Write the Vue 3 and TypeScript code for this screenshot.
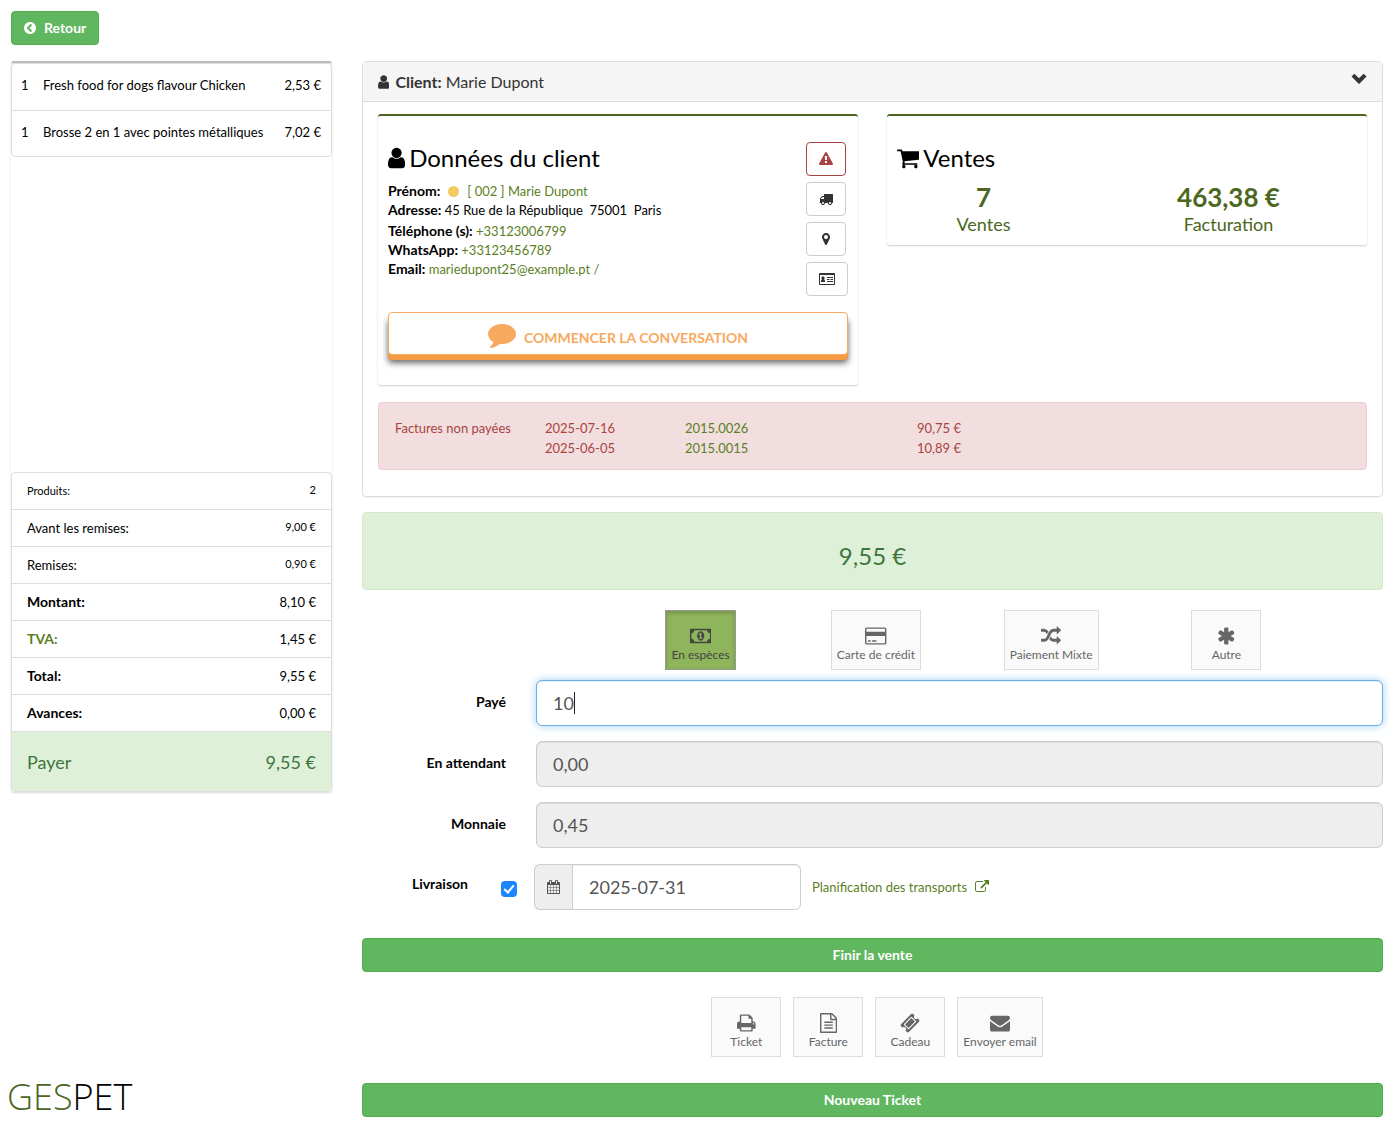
<script setup lang="ts">
import { defineComponent, h, ref } from 'vue'

interface Glyph { x: number; w: number; d: string }

const glyphs: Record<string, Glyph> = {
  back: { x: 128, w: 1536, d: 'M1037 1395l102-102q19-19 19-45t-19-45l-307-307 307-307q19-19 19-45t-19-45l-102-102q-19-19-45-19t-45 19l-454 454q-19 19-19 45t19 45l454 454q19 19 45 19t45-19zm627-499q0 209-103 385.5t-279.5 279.5-385.5 103-385.5-103-279.5-279.5-103-385.5 103-385.5 279.5-279.5 385.5-103 385.5 103 279.5 279.5 103 385.5z' },
  user: { x: 256, w: 1280, d: 'M1536 1399q0 109-62.5 187t-150.5 78h-854q-88 0-150.5-78t-62.5-187q0-85 8.5-160.5t31.5-152 58.5-131 94-89 134.5-34.5q131 128 313 128t313-128q76 0 134.5 34.5t94 89 58.5 131 31.5 152 8.5 160.5zm-256-887q0 159-112.5 271.5t-271.5 112.5-271.5-112.5-112.5-271.5 112.5-271.5 271.5-112.5 271.5 112.5 112.5 271.5z' },
  chevron: { x: 0, w: 1792, d: 'M56 620L376 300L896 820L1416 300L1736 620L896 1460z' },
  cart: { x: 64, w: 1664, d: 'M704 1536q0 52-38 90t-90 38-90-38-38-90 38-90 90-38 90 38 38 90zm896 0q0 52-38 90t-90 38-90-38-38-90 38-90 90-38 90 38 38 90zm128-1088v512q0 24-16.5 42.5t-40.5 21.5l-1044 122q13 60 13 70 0 16-24 64h920q26 0 45 19t19 45-19 45-45 19h-1024q-26 0-45-19t-19-45q0-11 8-31.5t16-36 21.5-40 15.5-29.5l-177-823h-204q-26 0-45-19t-19-45 19-45 45-19h256q16 0 28.5 6.5t19.5 15.5 13 24.5 8 26 5.5 29.5 4.5 26h1201q26 0 45 19t19 45z' },
  warning: { x: 0, w: 1792, d: 'M1024 1375v-190q0-14-9.5-23.5t-22.5-9.5h-192q-13 0-22.5 9.5t-9.5 23.5v190q0 14 9.5 23.5t22.5 9.5h192q13 0 22.5-9.5t9.5-23.5zm-2-374l18-459q0-12-10-19-13-11-24-11h-220q-11 0-24 11-10 7-10 21l17 457q0 10 10 16.5t24 6.5h185q14 0 23.5-6.5t10.5-16.5zm-14-934l768 1408q35 63-2 126-17 29-46.5 46t-63.5 17h-1536q-34 0-63.5-17t-46.5-46q-37-63-2-126l768-1408q17-31 47-49t65-18 65 18 47 49z' },
  truck: { x: 0, w: 1792, d: 'M640 1408q0-52-38-90t-90-38-90 38-38 90 38 90 90 38 90-38 38-90zm-384-512h384v-256h-158q-13 0-22 9l-195 195q-9 9-9 22v30zm1280 512q0-52-38-90t-90-38-90 38-38 90 38 90 90 38 90-38 38-90zm256-1088v1024q0 15-4 26.5t-13.5 18.5-16.5 11.5-23.5 6-22.5 2-25.5 0-22.5-.5q0 106-75 181t-181 75-181-75-75-181h-384q0 106-75 181t-181 75-181-75-75-181h-64q-3 0-22.5.5t-25.5 0-22.5-2-23.5-6-16.5-11.5-13.5-18.5-4-26.5q0-26 19-45t45-19v-320q0-8-.5-35t0-38 2.5-34.5 6.5-37 14-30.5 22.5-30l198-198q19-19 50.5-32t58.5-13h160v-192q0-26 19-45t45-19h1024q26 0 45 19t19 45z' },
  marker: { x: 384, w: 1024, d: 'M1152 640q0-106-75-181t-181-75-181 75-75 181 75 181 181 75 181-75 75-181zm256 0q0 109-33 179l-364 774q-16 33-47.5 52t-67.5 19-67.5-19-46.5-52l-365-774q-33-70-33-179 0-212 150-362t362-150 362 150 150 362z' },
  card: { x: 0, w: 2048, d: 'M0 256q0-128 128-128h1792q128 0 128 128v1280q0 128-128 128h-1792q-128 0-128-128zm128 128v1120q0 32 32 32h1728q32 0 32-32v-1120zM256 1280v-100q0-200 130-240a210 210 0 1 1 252 0q130 40 130 240v100zM1024 640h768v128h-768zM1024 896h320v128h-320zM1472 896h320v128h-320zM1024 1152h768v128h-768z' },
  comment: { x: 0, w: 1792, d: 'M1792 896q0 174-120 321.5t-326 233-450 85.5q-70 0-145-8-198 175-460 242-49 14-114 22-17 2-30.5-9t-17.5-29v-1q-3-4-.5-12t2-10 4.5-9.5l6-9 7-8.5 8-9q7-8 31-34.5t34.5-38 31-39.5 32.5-51 27-59 26-76q-157-89-247.5-220t-90.5-281q0-130 71-248.5t191-204.5 286-136.5 348-50.5 348 50.5 286 136.5 191 204.5 71 248.5z' },
  money: { x: 0, w: 1920, d: 'M768 1152h384v-96h-128v-448h-114l-148 137 77 80q42-37 55-57h2v288h-128v96zm512-256q0 70-21 142t-59.5 134-101.5 101-138 39-138-39-101.5-101-59.5-134-21-142 21-142 59.5-134 101.5-101 138-39 138 39 101.5 101 59.5 134 21 142zm512 256v-512q-106 0-181-75t-75-181h-1152q0 106-75 181t-181 75v512q106 0 181 75t75 181h1152q0-106 75-181t181-75zm128-832v1152q0 26-19 45t-45 19h-1792q-26 0-45-19t-19-45v-1152q0-26 19-45t45-19h1792q26 0 45 19t19 45z' },
  credit: { x: 0, w: 1920, d: 'M1760 128q66 0 113 47t47 113v1216q0 66-47 113t-113 47h-1600q-66 0-113-47t-47-113v-1216q0-66 47-113t113-47h1600zm-1600 128q-13 0-22.5 9.5t-9.5 22.5v224h1664v-224q0-13-9.5-22.5t-22.5-9.5h-1600zm1600 1280q13 0 22.5-9.5t9.5-22.5v-608h-1664v608q0 13 9.5 22.5t22.5 9.5h1600zm-1504-128v-128h256v128h-256zm384 0v-128h384v128h-384z' },
  random: { x: 0, w: 1792, d: 'M666 481q-60 92-137 273-22-45-37-72.5t-40.5-63.5-51-56.5-63-35-81.5-14.5h-224q-14 0-23-9t-9-23v-192q0-14 9-23t23-9h224q250 0 410 225zm1126 799q0 14-9 23l-320 320q-9 9-23 9-13 0-22.5-9.5t-9.5-22.5v-192q-32 0-85 .5t-81 1-73-1-71-5-64-10.5-63-18.5-58-28.5-59-40-55-53.5-56-69.5q59-93 136-273 22 45 37 72.5t40.5 63.5 51 56.5 63 35 81.5 14.5h256v-192q0-14 9-23t23-9q12 0 24 10l319 319q9 9 9 23zm0-896q0 14-9 23l-320 320q-9 9-23 9-13 0-22.5-9.5t-9.5-22.5v-192h-256q-48 0-87 15t-69 45-51 61.5-45 77.5q-32 62-78 171-29 66-49.5 111t-54 105-64 100-74 83-90 68.5-106.5 42-128 16.5h-224q-14 0-23-9t-9-23v-192q0-14 9-23t23-9h224q48 0 87-15t69-45 51-61.5 45-77.5q32-62 78-171 29-66 49.5-111t54-105 64-100 74-83 90-68.5 106.5-42 128-16.5h256v-192q0-14 9-23t23-9q12 0 24 10l319 319q9 9 9 23z' },
  asterisk: { x: 64, w: 1664, d: 'M1546 1050q46 26 59.5 77.5t-12.5 97.5l-64 110q-26 46-77.5 59.5t-97.5-12.5l-266-153v307q0 52-38 90t-90 38h-128q-52 0-90-38t-38-90v-307l-266 153q-46 26-97.5 12.5t-77.5-59.5l-64-110q-26-46-12.5-97.5t59.5-77.5l266-154-266-154q-46-26-59.5-77.5t12.5-97.5l64-110q26-46 77.5-59.5t97.5 12.5l266 153v-307q0-52 38-90t90-38h128q52 0 90 38t38 90v307l266-153q46-26 97.5-12.5t77.5 59.5l64 110q26 46 12.5 97.5t-59.5 77.5l-266 154z' },
  calendar: { x: 64, w: 1664, d: 'M192 1664h288v-288h-288v288zm352 0h320v-288h-320v288zm-352-352h288v-320h-288v320zm352 0h320v-320h-320v320zm-352-384h288v-288h-288v288zm736 736h320v-288h-320v288zm-384-736h320v-288h-320v288zm768 736h288v-288h-288v288zm-384-352h320v-320h-320v320zm-352-864v-288q0-13-9.5-22.5t-22.5-9.5h-64q-13 0-22.5 9.5t-9.5 22.5v288q0 13 9.5 22.5t22.5 9.5h64q13 0 22.5-9.5t9.5-22.5zm736 864h288v-320h-288v320zm-384-384h320v-288h-320v288zm384 0h288v-288h-288v288zm32-480v-288q0-13-9.5-22.5t-22.5-9.5h-64q-13 0-22.5 9.5t-9.5 22.5v288q0 13 9.5 22.5t22.5 9.5h64q13 0 22.5-9.5t9.5-22.5zm384-64v1280q0 52-38 90t-90 38h-1408q-52 0-90-38t-38-90v-1280q0-52 38-90t90-38h128v-96q0-66 47-113t113-47h64q66 0 113 47t47 113v96h384v-96q0-66 47-113t113-47h64q66 0 113 47t47 113v96h128q52 0 90 38t38 90z' },
  external: { x: 0, w: 1792, d: 'M1408 928v320q0 119-84.5 203.5t-203.5 84.5h-832q-119 0-203.5-84.5t-84.5-203.5v-832q0-119 84.5-203.5t203.5-84.5h704q14 0 23 9t9 23v64q0 14-9 23t-23 9h-704q-66 0-113 47t-47 113v832q0 66 47 113t113 47h832q66 0 113-47t47-113v-320q0-14 9-23t23-9h64q14 0 23 9t9 23zm384-864v512q0 26-19 45t-45 19-45-19l-176-176-652 652q-10 10-23 10t-23-10l-114-114q-10-10-10-23t10-23l652-652-176-176q-19-19-19-45t19-45 45-19h512q26 0 45 19t19 45z' },
  print: { x: 64, w: 1664, d: 'M448 1536h896v-256h-896v256zm0-640h896v-384h-160q-40 0-68-28t-28-68v-160h-640v640zm1152 64q0-26-19-45t-45-19-45 19-19 45 19 45 45 19 45-19 19-45zm128 0v416q0 13-9.5 22.5t-22.5 9.5h-224v160q0 40-28 68t-68 28h-960q-40 0-68-28t-28-68v-160h-224q-13 0-22.5-9.5t-9.5-22.5v-416q0-79 56.5-135.5t135.5-56.5h64v-544q0-40 28-68t68-28h672q40 0 88 20t76 48l152 152q28 28 48 76t20 88v256h64q79 0 135.5 56.5t56.5 135.5z' },
  file: { x: 128, w: 1536, d: 'M1596 380q28 28 48 76t20 88v1152q0 40-28 68t-68 28h-1344q-40 0-68-28t-28-68v-1600q0-40 28-68t68-28h896q40 0 88 20t76 48zm-444-244v376h376q-10-29-22-41l-313-313q-12-12-41-22zm384 1528v-1024h-416q-40 0-68-28t-28-68v-416h-768v1536h1280zm-1024-864q0-14 9-23t23-9h704q14 0 23 9t9 23v64q0 14-9 23t-23 9h-704q-14 0-23-9t-9-23v-64zm736 224q14 0 23 9t9 23v64q0 14-9 23t-23 9h-704q-14 0-23-9t-9-23v-64q0-14 9-23t23-9h704zm0 256q14 0 23 9t9 23v64q0 14-9 23t-23 9h-704q-14 0-23-9t-9-23v-64q0-14 9-23t23-9h704z' },
  ticket: { x: 0, w: 1792, d: 'M1024 452l316 316-572 572-316-316zm-211 979l618-618q19-19 19-45t-19-45l-362-362q-18-18-45-18t-45 18l-618 618q-19 19-19 45t19 45l362 362q18 18 45 18t45-18zm889-637l-907 908q-37 37-90.5 37t-90.5-37l-126-126q56-56 56-136t-56-136-136-56-136 56l-125-126q-37-37-37-90.5t37-90.5l907-906q37-37 90.5-37t90.5 37l125 125q-56 56-56 136t56 136 136 56 136-56l126 125q37 37 37 90.5t-37 90.5z' },
  envelope: { x: 0, w: 1792, d: 'M1792 710v794q0 66-47 113t-113 47h-1472q-66 0-113-47t-47-113v-794q44 49 101 87 362 246 497 345 57 42 92.5 65.5t94.5 48 110 24.5h2q51 0 110-24.5t94.5-48 92.5-65.5q170-123 498-345 57-39 100-87zm0-294q0 79-49 151t-122 123q-376 261-468 325-10 7-42.5 31t-54 38.5-52 32.5-57.5 27-50 9h-2q-23 0-50-9t-57.5-27-52-32.5-54-38.5-42.5-31q-91-64-262-182.5t-205-142.5q-62-42-117-115.5t-55-136.5q0-78 41.5-130t118.5-52h1472q65 0 112.5 47t47.5 113z' },
}

// Icon scaled by its font-size: 1792 units to the em.
const Icon = defineComponent({
  props: { name: { type: String, required: true } },
  setup(props) {
    return () => {
      const g = glyphs[props.name]
      return h('svg', {
        viewBox: `${g.x} 0 ${g.w} 1792`,
        style: { width: `${g.w / 1792}em`, height: '1em' },
        fill: 'currentColor',
        'fill-rule': props.name === 'card' ? 'evenodd' : 'nonzero',
        'aria-hidden': 'true',
      }, [h('path', { d: g.d })])
    }
  },
})

const products = [
  { qty: 1, name: 'Fresh food for dogs flavour Chicken', price: '2,53 €' },
  { qty: 1, name: 'Brosse 2 en 1 avec pointes métalliques', price: '7,02 €' },
]

const totals = [
  { label: 'Produits:', value: '2', kind: 'count' },
  { label: 'Avant les remises:', value: '9,00 €', kind: 'minor' },
  { label: 'Remises:', value: '0,90 €', kind: 'minor' },
  { label: 'Montant:', value: '8,10 €', kind: 'major' },
  { label: 'TVA:', value: '1,45 €', kind: 'major tax' },
  { label: 'Total:', value: '9,55 €', kind: 'major' },
  { label: 'Avances:', value: '0,00 €', kind: 'major' },
  { label: 'Payer', value: '9,55 €', kind: 'pay' },
]

const invoices = [
  { date: '2025-07-16', number: '2015.0026', amount: '90,75 €' },
  { date: '2025-06-05', number: '2015.0015', amount: '10,89 €' },
]

const methods = [
  { icon: 'money', label: 'En espèces' },
  { icon: 'credit', label: 'Carte de crédit' },
  { icon: 'random', label: 'Paiement Mixte' },
  { icon: 'asterisk', label: 'Autre' },
]

const outputs = [
  { icon: 'print', label: 'Ticket' },
  { icon: 'file', label: 'Facture' },
  { icon: 'ticket', label: 'Cadeau' },
  { icon: 'envelope', label: 'Envoyer email' },
]

const actions = [
  { icon: 'warning', label: 'Alertes' },
  { icon: 'truck', label: 'Livraisons' },
  { icon: 'marker', label: 'Localisation' },
  { icon: 'card', label: 'Fiche client' },
]

const method = ref('En espèces')
const paid = ref('10')
const pending = ref('0,00')
const change = ref('0,45')
const delivery = ref(true)
const deliveryDate = ref('2025-07-31')
</script>

<template>
  <div class="page">
    <header>
      <button type="button" class="btn back"><Icon name="back" />Retour</button>
    </header>

    <div class="columns">
      <aside class="side">
        <section class="receipt">
          <ul class="products">
            <li v-for="p in products" :key="p.name">
              <span class="qty">{{ p.qty }}</span>
              <span class="name">{{ p.name }}</span>
              <span class="price">{{ p.price }}</span>
            </li>
          </ul>
          <dl class="totals">
            <div v-for="t in totals" :key="t.label" :class="t.kind">
              <dt>{{ t.label }}</dt>
              <dd>{{ t.value }}</dd>
            </div>
          </dl>
        </section>
        <div class="logo"><span>GES</span>PET</div>
      </aside>

      <main>
        <section class="panel">
          <div class="panel-head">
            <Icon name="user" />
            <span><b>Client:</b> Marie Dupont</span>
            <button type="button" class="toggle" aria-label="Replier"><Icon name="chevron" /></button>
          </div>
          <div class="panel-body">
            <div class="cards">
              <article class="card customer">
                <div class="customer-top">
                  <div class="details">
                    <h2><Icon name="user" />Données du client</h2>
                    <p><b>Prénom:</b><i class="dot"></i><a href="#">[ 002 ] Marie Dupont</a></p>
                    <p class="address"><b>Adresse:</b> 45 Rue de la République&nbsp; 75001&nbsp; Paris</p>
                    <p><b>Téléphone (s):</b> <a href="#">+33123006799</a></p>
                    <p><b>WhatsApp:</b> <a href="#">+33123456789</a></p>
                    <p><b>Email:</b> <a href="#">mariedupont25@example.pt /</a></p>
                  </div>
                  <div class="actions">
                    <button v-for="a in actions" :key="a.icon" type="button" :class="a.icon" :aria-label="a.label">
                      <Icon :name="a.icon" />
                    </button>
                  </div>
                </div>
                <button type="button" class="chat"><Icon name="comment" /><span>COMMENCER LA CONVERSATION</span></button>
              </article>

              <article class="card sales">
                <h2><Icon name="cart" />Ventes</h2>
                <div class="stats">
                  <div><strong>7</strong><span>Ventes</span></div>
                  <div><strong>463,38 €</strong><span>Facturation</span></div>
                </div>
              </article>
            </div>

            <div class="unpaid">
              <table>
                <tbody>
                  <tr v-for="(inv, i) in invoices" :key="inv.number">
                    <th v-if="i === 0" :rowspan="invoices.length" scope="rowgroup">Factures non payées</th>
                    <td class="date">{{ inv.date }}</td>
                    <td class="number"><a href="#">{{ inv.number }}</a></td>
                    <td>{{ inv.amount }}</td>
                  </tr>
                </tbody>
              </table>
            </div>
          </div>
        </section>

        <div class="due">9,55 €</div>

        <div class="methods">
          <div v-for="m in methods" :key="m.label">
            <button type="button" class="tile" :class="{ active: method === m.label }" @click="method = m.label">
              <Icon :name="m.icon" />{{ m.label }}
            </button>
          </div>
        </div>

        <form @submit.prevent>
          <div class="row">
            <label for="paid">Payé</label>
            <div class="field focused"><input id="paid" v-model="paid" type="text"><i class="caret"></i></div>
          </div>
          <div class="row">
            <label for="pending">En attendant</label>
            <div class="field"><input id="pending" v-model="pending" type="text" readonly></div>
          </div>
          <div class="row">
            <label for="change">Monnaie</label>
            <div class="field"><input id="change" v-model="change" type="text" readonly></div>
          </div>
          <div class="row delivery">
            <label for="delivery">Livraison</label>
            <input id="delivery" v-model="delivery" type="checkbox">
            <div class="date-group">
              <span class="addon"><Icon name="calendar" /></span>
              <input v-model="deliveryDate" type="text" aria-label="Date de livraison">
            </div>
            <a href="#">Planification des transports<Icon name="external" /></a>
          </div>
          <button type="submit" class="btn wide">Finir la vente</button>
        </form>

        <div class="outputs">
          <button v-for="o in outputs" :key="o.label" type="button" class="tile"><Icon :name="o.icon" />{{ o.label }}</button>
        </div>

        <button type="button" class="btn wide">Nouveau Ticket</button>
      </main>
    </div>
  </div>
</template>

<style>
body {
  margin: 0;
  background: #fff;
}
</style>

<style scoped>
.page,
button,
input {
  font-family: Lato, "Liberation Sans", sans-serif;
  line-height: 20px;
}
.page {
  padding: 11px 12px 12px 11px;
  color: #000;
  font-size: 13px;
}
button,
b,
label {
  font-size: 14px;
}
.page *,
.page *::before,
.page *::after {
  box-sizing: border-box;
}
.page :deep(svg) {
  display: block;
  flex: none;
}
a {
  color: #5b7f24;
  text-decoration: none;
}
h2,
p,
dl,
dd,
ul {
  margin: 0;
  padding: 0;
}
button {
  cursor: pointer;
}

.btn {
  display: flex;
  align-items: center;
  justify-content: center;
  height: 34px;
  padding: 0 12px;
  border: 1px solid #4cae4c;
  border-radius: 4px;
  background: #60b760;
  color: #fff;
  font-weight: 700;
}
.back {
  gap: 8px;
}
.wide {
  width: 100%;
}

.columns {
  display: grid;
  grid-template-columns: 321fr 1021fr;
  gap: 30px;
  margin-top: 16px;
}

.side {
  display: flex;
  flex-direction: column;
}
.receipt {
  border-top: 2px solid #bbb;
  border-radius: 3px;
  box-shadow: 0 1px 2px rgba(0, 0, 0, 0.15);
}
.products {
  min-height: 409px;
  list-style: none;
}
.products li {
  display: flex;
  align-items: center;
  height: 47px;
  padding: 0 10px 4px 9px;
  border: 1px solid #ddd;
  border-bottom-width: 0;
}
.products li:first-child {
  border-radius: 4px 4px 0 0;
}
.products li:last-child {
  border-bottom-width: 1px;
  border-radius: 0 0 4px 4px;
}
.qty {
  width: 22px;
}
.name {
  flex: 1;
  white-space: nowrap;
}
.totals {
  border: 1px solid #ddd;
  border-radius: 4px;
  overflow: hidden;
}
.totals div {
  display: flex;
  align-items: center;
  justify-content: space-between;
  height: 37px;
  padding: 0 15px;
  border-bottom: 1px solid #ddd;
}
.count,
.minor dd {
  font-size: 11px;
}
.minor dd,
.count dd {
  padding-bottom: 2px;
}
.major dt {
  font-size: 14px;
  font-weight: 700;
}
.tax dt {
  color: #5b7f24;
}
.totals .pay {
  height: 59px;
  border: 0;
  background: #dff0d8;
  color: #3c763d;
  font-size: 18px;
}
.logo {
  margin-top: auto;
  margin-left: -4px;
  font-family: "Open Sans", sans-serif;
  font-size: 36px;
  font-weight: 300;
  line-height: 40px;
}
.logo span {
  color: #4b6422;
}

.panel {
  border: 1px solid #ddd;
  border-radius: 4px;
  box-shadow: 0 1px 1px rgba(0, 0, 0, 0.05);
}
.panel-head {
  display: flex;
  align-items: center;
  gap: 6px;
  height: 40px;
  padding: 0 15px;
  border-bottom: 1px solid #ddd;
  background: #f5f5f5;
  color: #333;
  font-size: 16px;
}
.panel-head b {
  font-size: 16px;
}
.toggle {
  margin-left: auto;
  padding: 0 0 6px;
  border: 0;
  background: none;
  color: #333;
  font-size: 16px;
}
.panel-body {
  padding: 12px 15px 26px;
}
.cards {
  display: grid;
  grid-template-columns: 1fr 1fr;
  align-items: start;
  gap: 29px;
}
.card {
  padding: 26px 10px 0;
  border-top: 2px solid #4b6422;
  border-radius: 3px;
  box-shadow: 0 1px 2px rgba(0, 0, 0, 0.2);
}
.customer {
  padding-bottom: 30px;
}
.customer-top {
  display: flex;
  justify-content: space-between;
}
h2 {
  display: flex;
  align-items: center;
  gap: 4px;
  height: 32px;
  margin-bottom: 7px;
  font-size: 24px;
  font-weight: 400;
}
.details p {
  height: 19px;
  white-space: nowrap;
}
.details .address {
  height: 21px;
}
.dot {
  display: inline-block;
  width: 11px;
  height: 11px;
  margin: 0 8px;
  border-radius: 50%;
  background: #f0cb62;
  vertical-align: -1px;
}
.actions {
  display: flex;
  flex-direction: column;
  align-items: flex-start;
  gap: 6px;
}
.actions button {
  display: flex;
  align-items: center;
  justify-content: center;
  min-width: 40px;
  height: 34px;
  padding: 0 12px;
  border: 1px solid #ccc;
  border-radius: 4px;
  background: #fff;
  color: #333;
}
.actions .warning {
  border-color: #a94442;
  color: #a94442;
}
.actions .card {
  box-shadow: none;
}
.chat {
  display: flex;
  align-items: center;
  justify-content: center;
  gap: 8px;
  width: 100%;
  height: 43px;
  margin-top: 16px;
  border: 1px solid #f7a95f;
  border-radius: 4px;
  background: #fff;
  box-shadow: 0 5px 0 #f59b45, 0 8px 6px rgba(0, 0, 0, 0.6);
  color: #f7a95f;
  font-weight: 700;
}
.chat :deep(svg) {
  font-size: 28px;
}
.chat span {
  padding-top: 8px;
}
.sales {
  padding-bottom: 10px;
}
.stats {
  display: grid;
  grid-template-columns: 1fr 1fr;
  margin: 0 6px 0 -36px;
  color: #4b6720;
  font-size: 18px;
  text-align: center;
}
.stats strong,
.stats span {
  display: block;
}
.stats strong {
  font-size: 26px;
  line-height: 32px;
}
.stats span {
  line-height: 22px;
}

.unpaid {
  margin-top: 17px;
  padding: 15px 16px 11px;
  border: 1px solid #ebccd1;
  border-radius: 4px;
  background: #f2dede;
  color: #a94442;
}
.unpaid table {
  width: 100%;
  border-collapse: collapse;
}
.unpaid th,
.unpaid td {
  padding: 0;
  font-weight: 400;
  text-align: left;
  vertical-align: top;
}
.unpaid th {
  width: 150px;
}
.unpaid .date {
  width: 140px;
}
.unpaid .number {
  width: 232px;
}

.due {
  margin-top: 15px;
  padding: 28px 0 18px;
  border: 1px solid #d6e9c6;
  border-radius: 4px;
  background: #dff0d8;
  color: #3c763d;
  font-size: 24px;
  line-height: 30px;
  text-align: center;
}

.methods {
  display: grid;
  grid-template-columns: repeat(4, 1fr);
  margin: 20px 0 10px;
  padding: 0 69px 0 251px;
  text-align: center;
}
.tile {
  display: inline-flex;
  flex-direction: column;
  align-items: center;
  gap: 1px;
  min-width: 70px;
  height: 60px;
  padding: 15px 5px 0;
  border: 1px solid #ddd;
  background: #fafafa;
  color: #666;
  font-size: 12px;
  line-height: 16px;
  white-space: nowrap;
  vertical-align: top;
}
.tile :deep(svg) {
  font-size: 20px;
}
.tile.active {
  border-color: #999;
  background: #8eb55c;
  box-shadow: inset 0 2px 4px rgba(0, 0, 0, 0.2);
  color: #444;
}

.row {
  display: flex;
  align-items: center;
  gap: 30px;
  margin-bottom: 15px;
}
.row label {
  width: 144px;
  padding-bottom: 2px;
  font-weight: 700;
  text-align: right;
}
.field {
  position: relative;
  flex: 1;
}
.row input[type="text"] {
  display: block;
  width: 100%;
  height: 46px;
  padding: 0 16px;
  border: 1px solid #ccc;
  border-radius: 6px;
  outline: 0;
  background: #fff;
  box-shadow: inset 0 1px 1px rgba(0, 0, 0, 0.075);
  color: #555;
  font-size: 18px;
}
.row input[readonly] {
  background: #eee;
}
.row .focused input {
  border-color: #66afe9;
  box-shadow: inset 0 1px 1px rgba(0, 0, 0, 0.075), 0 0 8px rgba(102, 175, 233, 0.6);
}
.caret {
  position: absolute;
  top: 12px;
  left: 38px;
  width: 1px;
  height: 22px;
  background: #222;
}
.row.delivery {
  gap: 0;
  margin: 16px 0 28px;
}
.delivery label {
  width: 106px;
  padding-bottom: 6px;
}
.delivery input[type="checkbox"] {
  position: relative;
  width: 16px;
  height: 16px;
  margin: 4px 17px 0 33px;
  border-radius: 4px;
  background: #1d86ff;
  appearance: none;
}
.delivery input[type="checkbox"]:checked::after {
  content: "";
  position: absolute;
  top: 2px;
  left: 5px;
  width: 6px;
  height: 10px;
  border: solid #fff;
  border-width: 0 2px 2px 0;
  transform: rotate(40deg);
}
.date-group {
  display: flex;
  width: 267px;
  margin-right: 11px;
}
.date-group .addon {
  display: flex;
  align-items: center;
  justify-content: center;
  width: 38px;
  border: 1px solid #ccc;
  border-right: 0;
  border-radius: 6px 0 0 6px;
  background: #eee;
  color: #555;
  font-size: 14px;
}
.row .date-group input {
  flex: 1;
  width: 0;
  border-radius: 0 6px 6px 0;
}
.delivery a {
  display: flex;
  align-items: center;
  gap: 8px;
}
.delivery a :deep(svg) {
  font-size: 14px;
}

.outputs {
  display: flex;
  justify-content: center;
  gap: 12px;
  margin: 25px 0 26px;
  padding-left: 9px;
}
</style>
